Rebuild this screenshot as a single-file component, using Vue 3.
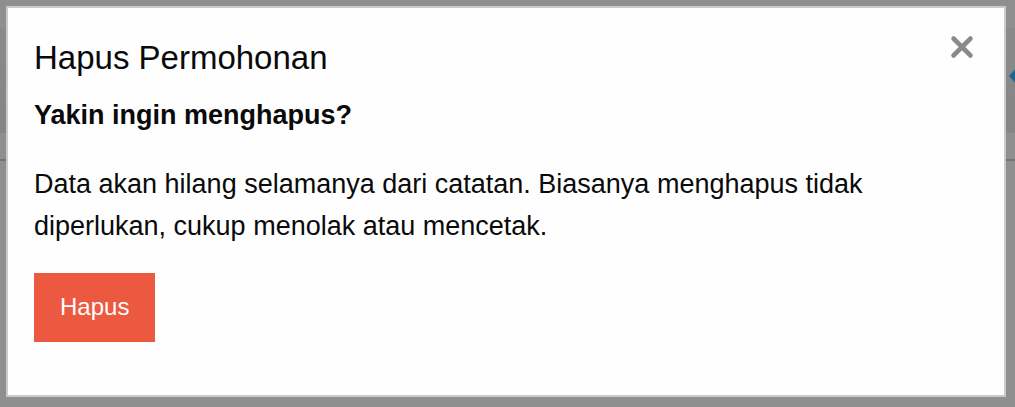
<script setup>
import { ref } from 'vue'

const open = ref(true)
function close() {
  open.value = false
}
</script>

<template>
  <div class="page">
    <div class="backdrop" aria-hidden="true">
      <div class="top-strip"></div>
      <div class="header-strip">
        <svg class="marker" width="6" height="14" viewBox="0 0 6 14">
          <path d="M6 0.5L0 7L6 13.5Z" fill="#1d6493" />
        </svg>
      </div>
      <div class="tab-strip"></div>
    </div>
    <section v-if="open" class="dialog" role="dialog" aria-modal="true" aria-labelledby="dialog-title">
      <button class="close" type="button" aria-label="Tutup" @click="close">
        <svg width="24" height="24" viewBox="0 0 24 24">
          <path d="M3.6 3.6L20.4 20.4M20.4 3.6L3.6 20.4" fill="none" stroke="#8a8a8a" stroke-width="4.8" stroke-linecap="round" />
        </svg>
      </button>
      <h1 id="dialog-title">Hapus Permohonan</h1>
      <p><strong>Yakin ingin menghapus?</strong></p>
      <p>Data akan hilang selamanya dari catatan. Biasanya menghapus tidak diperlukan, cukup menolak atau mencetak.</p>
      <button class="delete" type="button" @click="close">Hapus</button>
    </section>
  </div>
</template>

<style>
html,
body {
  background: #8f8f8f;
}
</style>

<style scoped>
.page {
  position: relative;
  box-sizing: border-box;
  min-height: 100vh;
  padding: 6px 9px 10px 6px;
  display: flex;
  background: #8f8f8f;
  color: #0a0a0a;
  font-family: Arial, "Liberation Sans", sans-serif;
}
.backdrop {
  position: absolute;
  inset: 0;
}
.top-strip {
  height: 28px;
}
.header-strip {
  height: 105px;
  display: flex;
  align-items: center;
  justify-content: flex-end;
  background: linear-gradient(#8a8a8a, #858585);
}
.marker {
  display: block;
  margin-bottom: 10px;
}
.tab-strip {
  height: 26px;
  border-bottom: 2px solid #737373;
}
.dialog {
  position: relative;
  box-sizing: border-box;
  flex: 1;
  padding: 26px;
  border: 2px solid #cacaca;
  background: #fefefe;
}
h1 {
  margin: 0 0 12px;
  font-size: 33px;
  font-weight: 400;
  line-height: 48px;
}
p {
  margin: 0 0 27px;
  font-size: 27px;
  line-height: 42px;
}
p + p {
  margin-bottom: 26px;
}
.delete {
  display: block;
  padding: 21px 26px 23px;
  border: 0;
  border-radius: 0;
  background: #ec5840;
  color: #fefefe;
  font: inherit;
  font-size: 24px;
  line-height: 25px;
  cursor: pointer;
}
.close {
  position: absolute;
  top: 27px;
  right: 30px;
  padding: 0;
  border: 0;
  background: none;
  cursor: pointer;
}
.close svg {
  display: block;
}
</style>
